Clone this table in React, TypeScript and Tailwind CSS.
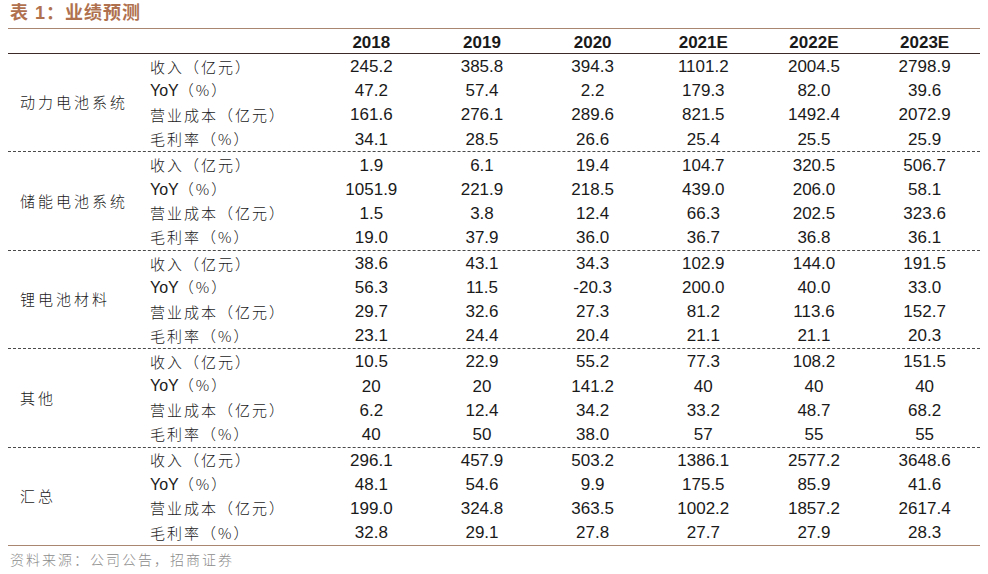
import React from 'react';

const years = ['2018', '2019', '2020', '2021E', '2022E', '2023E'];

const rowLabels = ['收入（亿元）', 'YoY（%）', '营业成本（亿元）', '毛利率（%）'];

const groups = [
  {
    name: '动力电池系统',
    rows: [
      ['245.2', '385.8', '394.3', '1101.2', '2004.5', '2798.9'],
      ['47.2', '57.4', '2.2', '179.3', '82.0', '39.6'],
      ['161.6', '276.1', '289.6', '821.5', '1492.4', '2072.9'],
      ['34.1', '28.5', '26.6', '25.4', '25.5', '25.9'],
    ],
  },
  {
    name: '储能电池系统',
    rows: [
      ['1.9', '6.1', '19.4', '104.7', '320.5', '506.7'],
      ['1051.9', '221.9', '218.5', '439.0', '206.0', '58.1'],
      ['1.5', '3.8', '12.4', '66.3', '202.5', '323.6'],
      ['19.0', '37.9', '36.0', '36.7', '36.8', '36.1'],
    ],
  },
  {
    name: '锂电池材料',
    rows: [
      ['38.6', '43.1', '34.3', '102.9', '144.0', '191.5'],
      ['56.3', '11.5', '-20.3', '200.0', '40.0', '33.0'],
      ['29.7', '32.6', '27.3', '81.2', '113.6', '152.7'],
      ['23.1', '24.4', '20.4', '21.1', '21.1', '20.3'],
    ],
  },
  {
    name: '其他',
    rows: [
      ['10.5', '22.9', '55.2', '77.3', '108.2', '151.5'],
      ['20', '20', '141.2', '40', '40', '40'],
      ['6.2', '12.4', '34.2', '33.2', '48.7', '68.2'],
      ['40', '50', '38.0', '57', '55', '55'],
    ],
  },
  {
    name: '汇总',
    rows: [
      ['296.1', '457.9', '503.2', '1386.1', '2577.2', '3648.6'],
      ['48.1', '54.6', '9.9', '175.5', '85.9', '41.6'],
      ['199.0', '324.8', '363.5', '1002.2', '1857.2', '2617.4'],
      ['32.8', '29.1', '27.8', '27.7', '27.9', '28.3'],
    ],
  },
];

const cjk = { fontFamily: '"Noto Sans CJK SC", sans-serif' };
const latin = { fontFamily: '"Liberation Sans", "Noto Sans CJK SC", sans-serif' };

function RowLabel({ text }: { text: string }) {
  if (text.startsWith('YoY')) {
    return (
      <>
        <span className="tracking-normal text-[16px]" style={latin}>YoY</span>
        <span className="tracking-[2px]">（%）</span>
      </>
    );
  }
  return <span className="tracking-[2px]">{text}</span>;
}

export default function App() {
  return (
    <div className="w-[988px] h-[574px] bg-white overflow-hidden text-[#1a1a1a]">
      <div className="mx-[8px] w-[972px]">
        {/* title */}
        <div className="h-[29px] flex items-center pl-[2px] pb-[1px] border-b border-[#a8866f]">
          <span className="text-[18px] font-bold text-[#b0714f] tracking-[1px]" style={latin}>
            表 1：业绩预测
          </span>
        </div>

        {/* header */}
        <div className="flex h-[25px] items-end border-b-[1.5px] border-[#3b2a28]">
          <div className="w-[308px]" />
          {years.map((y) => (
            <div key={y} className="w-[110.67px] text-center text-[17px] font-bold leading-[20px]" style={latin}>
              {y}
            </div>
          ))}
        </div>

        {/* groups */}
        {groups.map((g, gi) => (
          <div
            key={g.name}
            className={
              gi === groups.length - 1
                ? 'flex border-b border-[#a8866f]'
                : 'flex border-b border-dashed border-[#4a4a4a]'
            }
          >
            <div className="w-[134px] pl-[12px] flex items-center">
              <span className="text-[15px] font-light tracking-[3px]" style={cjk}>
                {g.name}
              </span>
            </div>
            <div className="flex-1 pt-[1px]">
              {g.rows.map((vals, ri) => (
                <div key={ri} className="flex h-[24.1px] items-center">
                  <div className="w-[174px] pl-[8px] text-[15px] font-light whitespace-nowrap" style={cjk}>
                    <RowLabel text={rowLabels[ri]} />
                  </div>
                  {vals.map((v, vi) => (
                    <div key={vi} className="w-[110.67px] text-center text-[17px]" style={latin}>
                      {v}
                    </div>
                  ))}
                </div>
              ))}
            </div>
          </div>
        ))}

        {/* source */}
        <div className="pt-[3px] pl-[2px] text-[14px] text-[#8c8c8c] tracking-[2px] font-light" style={cjk}>
          资料来源：公司公告，招商证券
        </div>
      </div>
    </div>
  );
}
